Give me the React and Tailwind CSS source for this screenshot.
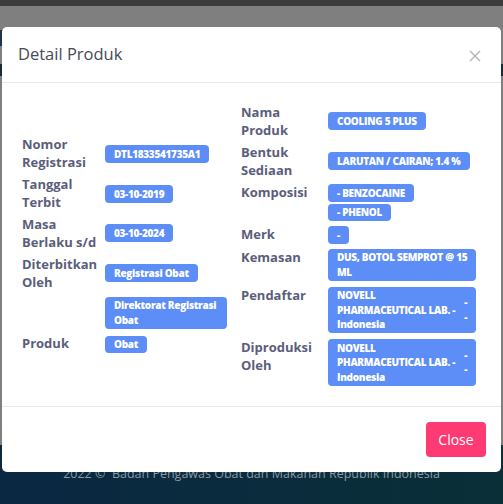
import React from 'react';

const Badge = ({ children, className = 'inline-block' }) => (
  <span
    className={`rounded-[4px] bg-[#5d8df6] px-[9px] py-[1.5px] text-[10px] font-extrabold leading-[14.5px] tracking-[-0.3px] text-white ${className}`}
  >
    {children}
  </span>
);

const Row = ({ label, labelW, valueCls = '', className = '', children }) => (
  <div className={`flex items-start ${className}`}>
    <div className={`${labelW} shrink-0 text-[13px] font-bold leading-[18px] text-[#5a5e7b]`}>{label}</div>
    <div className={`flex min-w-0 flex-1 flex-col items-start ${valueCls}`}>{children}</div>
  </div>
);

const CompanyBadge = () => (
  <Badge className="flex w-full items-center justify-between gap-1">
    <span className="whitespace-nowrap">
      NOVELL
      <br />
      PHARMACEUTICAL LAB. -
      <br />
      Indonesia
    </span>
    <span className="shrink-0">
      -
      <br />-
    </span>
  </Badge>
);

export default function App() {
  return (
    <div className="relative flex h-[504px] w-full flex-col overflow-hidden bg-[#7f7f7f] font-['Open_Sans',sans-serif]">
      {/* page behind the backdrop */}
      <div className="h-[6px] bg-[#3b3b3b]" />
      <div className="mt-[24px] h-[16px] w-[3px] bg-[#1d3550]" />
      <div className="mt-[18px] h-[12px] w-full bg-[#152b3a]" />
      <div className="flex-1" />
      <div className="flex h-[59px] items-center justify-center bg-gradient-to-r from-[#0b2843] to-[#0a2f37] text-[12.5px] text-[#8c9aa4]">
        2022 ©&nbsp; Badan Pengawas Obat dan Makanan Republik Indonesia
      </div>

      {/* modal */}
      <div className="absolute left-[2px] top-[27px] w-[499px] rounded-[5px] bg-white">
        <div className="flex h-[56px] items-center justify-between border-b border-[#e6e8eb] pl-4 pr-[20px]">
          <h2 className="text-[16.5px] text-[#474a57]">Detail Produk</h2>
          <svg width="12" height="12" viewBox="0 0 12 12" className="mt-[2px]">
            <path d="M1 1 L11 11 M11 1 L1 11" stroke="#b3b3b3" strokeWidth="1.4" fill="none" />
          </svg>
        </div>

        <div className="flex items-center pb-5 pl-5 pr-[25px] pt-5">
          <div className="flex w-[219px] shrink-0 flex-col gap-1">
            <Row labelW="w-[83px]" valueCls="pt-[10px]" label={<>Nomor<br />Registrasi</>}>
              <Badge>DTL1833541735A1</Badge>
            </Row>
            <Row labelW="w-[83px]" valueCls="pt-[10px]" label={<>Tanggal<br />Terbit</>}>
              <Badge>03-10-2019</Badge>
            </Row>
            <Row labelW="w-[83px]" valueCls="pt-[9px]" label={<>Masa<br />Berlaku s/d</>}>
              <Badge>03-10-2024</Badge>
            </Row>
            <Row labelW="w-[83px]" valueCls="pt-[9px] pr-[14px]" label={<>Diterbitkan<br />Oleh</>}>
              <Badge>Registrasi Obat</Badge>
              <Badge className="mt-[15px] block w-full">
                Direktorat Registrasi
                <br />
                Obat
              </Badge>
            </Row>
            <Row labelW="w-[83px]" valueCls="pt-[2px]" className="mt-[1px]" label="Produk">
              <Badge>Obat</Badge>
            </Row>
          </div>

          <div className="flex flex-1 flex-col gap-1">
            <Row labelW="w-[87px]" valueCls="pt-[9px]" label={<>Nama<br />Produk</>}>
              <Badge>COOLING 5 PLUS</Badge>
            </Row>
            <Row labelW="w-[87px]" valueCls="pt-[9px]" label={<>Bentuk<br />Sediaan</>}>
              <Badge>LARUTAN / CAIRAN; 1.4 %</Badge>
            </Row>
            <Row labelW="w-[87px]" valueCls="pt-[1px]" label="Komposisi">
              <Badge>- BENZOCAINE</Badge>
              <Badge className="mt-[2px] inline-block">- PHENOL</Badge>
            </Row>
            <Row labelW="w-[87px]" valueCls="pt-[1px]" label="Merk">
              <Badge>-</Badge>
            </Row>
            <Row labelW="w-[87px]" valueCls="pt-[1px]" label="Kemasan">
              <Badge className="block w-full whitespace-nowrap">
                DUS, BOTOL SEMPROT @ 15
                <br />
                ML
              </Badge>
            </Row>
            <Row labelW="w-[87px]" valueCls="pt-[1px]" className="mt-[1px]" label="Pendaftar">
              <CompanyBadge />
            </Row>
            <Row labelW="w-[87px]" valueCls="pt-[1px]" className="mt-[1px]" label={<>Diproduksi<br />Oleh</>}>
              <CompanyBadge />
            </Row>
          </div>
        </div>

        <div className="flex h-[66px] items-center justify-end border-t border-[#e6e8eb] pr-[15px]">
          <button className="h-[35px] w-[60px] rounded-[4px] bg-[#fd3a73] text-[14px] font-medium text-white">
            Close
          </button>
        </div>
      </div>
    </div>
  );
}
